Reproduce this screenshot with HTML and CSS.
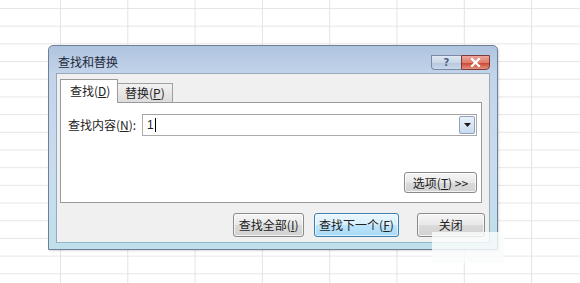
FILE: index.html
```html
<!DOCTYPE html>
<html lang="zh-CN">
<head>
<meta charset="utf-8">
<title>查找和替换</title>
<link rel="stylesheet" href="styles.css">
</head>
<body>
<div class="sheet"></div>
<div class="dialog">
  <div class="titlebar">
    <span class="title">查找和替换</span>
    <div class="caption-btns">
      <span class="cap help">?</span>
      <span class="cap close"><svg width="11" height="9" viewBox="0 0 11 9"><path d="M2 1 L9 8 M9 1 L2 8" stroke="#fff" stroke-width="2.2" stroke-linecap="square"/></svg></span>
    </div>
  </div>
  <div class="body">
    <div class="tabs">
      <div class="tab active">查找(<u>D</u>)</div>
      <div class="tab">替换(<u>P</u>)</div>
    </div>
    <div class="panel">
      <div class="row">
        <label class="label">查找内容(<u>N</u>):</label>
        <div class="combo">
          <span class="value">1</span><span class="caret"></span>
          <span class="drop"><svg width="7" height="4" viewBox="0 0 7 4"><path d="M0 0 H7 L3.5 4 Z" fill="#1a1a1a"/></svg></span>
        </div>
      </div>
      <div class="options-row">
        <button class="btn options">选项(<u>T</u>) &gt;&gt;</button>
      </div>
    </div>
    <div class="actions">
      <button class="btn b1">查找全部(<u>I</u>)</button>
      <button class="btn b2 focus">查找下一个(<u>F</u>)</button>
      <button class="btn b3">关闭</button>
    </div>
  </div>
</div>
<div class="haze"></div>
</body>
</html>
```
FILE: styles.css
```css
html, body {
  margin: 0;
  padding: 0;
  width: 580px;
  height: 283px;
  overflow: hidden;
  background: #fff;
  font-family: "Noto Sans CJK SC", "Noto Sans", sans-serif;
  font-size: 12px;
  color: #222;
}
.sheet {
  width: 580px;
  height: 283px;
  background-image:
    linear-gradient(to right, #e3e3e3 1px, transparent 1px),
    linear-gradient(to bottom, #e6e6e6 1px, transparent 1px);
  background-size: 67.3px 100%, 100% 17.7px;
  background-position: 60px 0, 0 8px;
}
.dialog {
  position: absolute;
  left: 48px;
  top: 45px;
  width: 450px;
  height: 205px;
  border: 1px solid #6f7f96;
  border-radius: 5px 5px 0 0;
  background: linear-gradient(to bottom, #afc4df 0, #c2d4ea 28px, #c9dcef 60%, #bfe0ea 100%);
  padding: 0 7px 6px 7px;
  box-sizing: border-box;
  display: flex;
  flex-direction: column;
  box-shadow: 1px 1px 2px rgba(0,0,0,0.15);
}
.titlebar {
  height: 27px;
  display: flex;
  align-items: flex-start;
  justify-content: space-between;
  flex: none;
}
.title {
  margin-top: 9px;
  margin-left: 2px;
  font-size: 12px;
  line-height: 14px;
  color: #1e2a3a;
}
.caption-btns {
  display: flex;
  margin-top: 9px;
  margin-right: 0;
}
.cap {
  height: 15px;
  display: flex;
  align-items: center;
  justify-content: center;
  box-sizing: border-box;
  border: 1px solid #7a8aa2;
}
.help {
  width: 30px;
  border-radius: 0 0 0 4px;
  border-right: none;
  background: linear-gradient(to bottom, #dfe8f3 0, #c9d6e6 50%, #b5c6dc 51%, #c9d9ec 100%);
  color: #4d6282;
  font-family: "DejaVu Sans", sans-serif;
  font-weight: bold;
  font-size: 10px;
  line-height: 13px;
}
.close {
  width: 29px;
  border-radius: 0 0 4px 0;
  border-color: #7b3b3b;
  background: linear-gradient(to bottom, #eca79a 0, #dc7d6d 50%, #c8412c 51%, #e4937f 100%);
}
.body {
  flex: 1;
  background: #f0f0f0;
  border: 1px solid #98a9bd;
  border-bottom-color: #8fb9c9;
  padding: 6px 7px 0 3px;
  display: flex;
  flex-direction: column;
}
.tabs {
  display: flex;
  align-items: flex-end;
  height: 23px;
  position: relative;
  z-index: 1;
  margin-bottom: -1px;
}
.tab {
  height: 19px;
  padding: 0 7px;
  box-sizing: border-box;
  border: 1px solid #a0a0a0;
  border-bottom: none;
  background: linear-gradient(to bottom, #f2f2f2, #dcdcdc);
  line-height: 18px;
  font-size: 12px;
  color: #222;
}
.tab + .tab {
  border-left: none;
  margin-bottom: 1px;
  height: 19px;
}
.tab.active {
  height: 24px;
  width: 58px;
  background: #fff;
  padding: 2px 0 0 9px;
  border-color: #9a9a9a;
}
.tab u, .btn u, .label u { text-decoration: underline; text-underline-offset: 1px; }
.panel {
  height: 101px;
  background: #fff;
  border: 1px solid #9a9a9a;
  box-sizing: border-box;
  margin-right: 0;
  display: flex;
  flex-direction: column;
  padding: 11px 4px 9px 7px;
}
.row {
  display: flex;
  align-items: center;
  height: 22px;
}
.label {
  width: 74px;
  flex: none;
  line-height: 14px;
}
.combo {
  flex: 1;
  height: 22px;
  box-sizing: border-box;
  border: 1px solid #ababab;
  border-top-color: #a2a2a2;
  display: flex;
  align-items: center;
  padding-left: 4px;
  position: relative;
}
.value {
  font-family: "Liberation Sans", sans-serif;
  font-size: 12px;
  line-height: 14px;
}
.caret {
  width: 1px;
  height: 14px;
  background: #000;
  margin-left: 1px;
}
.drop {
  margin-left: auto;
  width: 16px;
  height: 18px;
  margin-right: 1px;
  box-sizing: border-box;
  border: 1px solid #8ea3bf;
  border-radius: 2px;
  background: linear-gradient(to bottom, #eaf2fb, #c9dbef);
  display: flex;
  align-items: center;
  justify-content: center;
}
.options-row {
  margin-top: auto;
  display: flex;
  justify-content: flex-end;
}
.btn {
  font-family: "Noto Sans CJK SC", "Noto Sans", sans-serif;
  font-size: 12px;
  color: #222;
  border: 1px solid #8a8a8a;
  border-radius: 3px;
  background: linear-gradient(to bottom, #f6f6f6 0, #e8e8e8 50%, #dadada 51%, #d2d2d2 100%);
  box-shadow: inset 0 0 0 1px rgba(255,255,255,0.7);
  padding: 0;
  line-height: 14px;
  display: flex;
  align-items: center;
  justify-content: center;
}
.options {
  width: 73px;
  height: 21px;
  letter-spacing: 0;
}
.actions {
  display: flex;
  height: 24px;
  margin-top: 10px;
  padding-left: 173px;
}
.actions .btn { height: 24px; }
.b1 { width: 72px; }
.b2 { width: 85px; margin-left: 10px; }
.b3 { width: 69px; margin-left: 18px; margin-right: -3px; }
.btn.focus {
  border-color: #3c7fb1;
  background: linear-gradient(to bottom, #eaf6fd 0, #d9f0fc 50%, #bee6fd 51%, #a7d9f5 100%);
  box-shadow: inset 0 0 0 1px rgba(255,255,255,0.6);
}
.haze {
  position: absolute;
  left: 432px;
  top: 232px;
  width: 72px;
  height: 31px;
  background: rgba(250,252,252,0.82);
}
```
